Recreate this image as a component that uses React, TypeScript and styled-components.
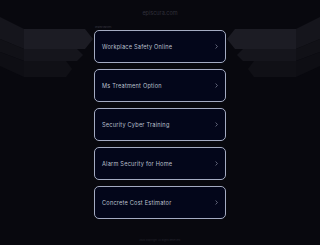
import styled, { createGlobalStyle } from 'styled-components';

const GlobalStyle = createGlobalStyle`
    html, body {
        margin: 0;
        padding: 0;
        background: #08080e;
    }
    * { box-sizing: border-box; }
`

const Page = styled.div`
    position: relative;
    width: 320px;
    height: 245px;
    overflow: hidden;
    background: #08080e;
    font-family: Inter, "Liberation Sans", sans-serif;
`

const Backdrop = styled.svg`
    position: absolute;
    left: 0;
    top: 0;
    width: 320px;
    height: 245px;
`

const Content = styled.div`
    position: relative;
    display: flex;
    flex-direction: column;
    align-items: center;
    padding-top: 9px;
`

const Domain = styled.div`
    font-size: 5.5px;
    color: #30303b;
    height: 8px;
    line-height: 8px;
`

const Listing = styled.div`
    width: 132px;
    margin-top: 9px;
    display: flex;
    flex-direction: column;
    gap: 6px;
`

const Label = styled.div`
    font-size: 2px;
    line-height: 3px;
    color: #3a3a44;
    padding-left: 1px;
    margin-bottom: -5px;
`

const Card = styled.a`
    height: 33px;
    display: flex;
    align-items: center;
    justify-content: space-between;
    padding: 0 7px 0 7px;
    border: 1px solid #a4abc2;
    border-radius: 5px;
    background: #03061a;
    color: #bcc0ce;
    font-size: 5.6px;
    font-weight: 400;
    letter-spacing: 0.22px;
    text-decoration: none;
`

const Footer = styled.div`
    margin-top: 20px;
    font-size: 2.4px;
    color: #26262e;
`

const Chevron = () => (
    <svg width="3" height="5" viewBox="0 0 3 5">
        <path d="M0.6 0.5 L2.4 2.5 L0.6 4.5" fill="none" stroke="#9aa0b4" strokeWidth="0.6" />
    </svg>
)

const Blocks = () => (
    <g>
        <polygon points="0,17 24,29 24,49 0,39" fill="#15151c" />
        <polygon points="0,39 24,49 24,61 0,52" fill="#111117" />
        <polygon points="0,52 24,61 24,77 0,66" fill="#0e0e14" />
        <polygon points="24,29 85,29 93,39 85,49 24,49" fill="#1c1c24" />
        <polygon points="24,49 77,49 83,55 77,61 24,61" fill="#15151c" />
        <polygon points="24,61 66,61 72,69 66,77 24,77" fill="#101016" />
    </g>
)

const searches = [
    'Workplace Safety Online',
    'Ms Treatment Option',
    'Security Cyber Training',
    'Alarm Security for Home',
    'Concrete Cost Estimator',
]

const App = () => {
    return <Page>
        <GlobalStyle />
        <Backdrop viewBox="0 0 320 245">
            <Blocks />
            <g transform="translate(320,0) scale(-1,1)">
                <Blocks />
            </g>
        </Backdrop>
        <Content>
            <Domain>episcura.com</Domain>
            <Listing>
                <Label>Related searches</Label>
                {searches.map(s => (
                    <Card key={s} href="#">
                        <span>{s}</span>
                        <Chevron />
                    </Card>
                ))}
            </Listing>
            <Footer>2024 Copyright. All Rights Reserved.</Footer>
        </Content>
    </Page>;
}

export default App;
